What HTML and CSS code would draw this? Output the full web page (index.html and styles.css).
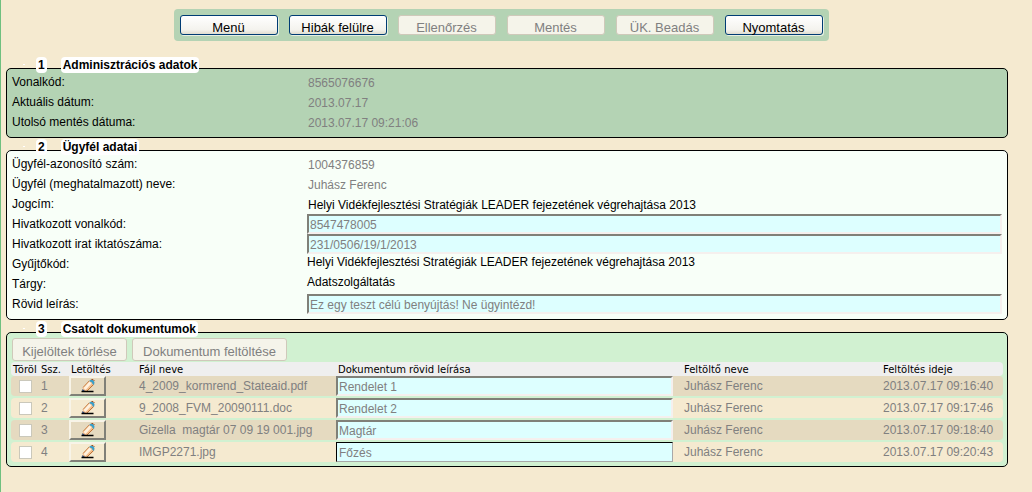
FILE: index.html
```
<!DOCTYPE html>
<html lang="hu">
<head>
<meta charset="utf-8">
<title>Adatszolgáltatás</title>
<link rel="stylesheet" href="styles.css">
</head>
<body>
<svg class="defs" aria-hidden="true">
  <symbol id="pencil" viewBox="0 0 14 14">
    <path d="M1.500 12 L2 8 L8 1.500 L10.500 1 L13.500 4 L12.500 6.500 L6.500 12 Z" fill="#f6bf8c"/>
    <path d="M2.500 9 L8.500 2.500 L10.500 4.500 L4.500 11 Z" fill="#fff1de"/>
    <path d="M6 12 L12.500 5.500" stroke="#b8733c" fill="none"/>
    <path d="M2 8.500 L8 2" stroke="#c98c58" fill="none"/>
    <path d="M8 2 L10 0.500 L12 1 L13.500 3 L13 6 L11.500 5 L11 3.500 Z" fill="#3b9fc8"/>
    <path d="M10.500 0.500 H12 L13.500 2" stroke="#a2501f" fill="none"/>
    <path d="M1.500 10 L1 12.500 L4 12 Z" fill="#2c4a86"/>
    <path d="M0.500 12.500 H12.500" stroke="#000" stroke-width="1.500"/>
  </symbol>
</svg>
<main class="page">
  <nav class="toolbar">
    <button type="button" class="btn">Menü</button>
    <button type="button" class="btn">Hibák felülre</button>
    <button type="button" class="btn" disabled>Ellenőrzés</button>
    <button type="button" class="btn" disabled>Mentés</button>
    <button type="button" class="btn" disabled>ÜK. Beadás</button>
    <button type="button" class="btn">Nyomtatás</button>
  </nav>

  <fieldset class="panel panel-admin">
    <legend class="legend"><span class="chip">1</span><span class="chip">Adminisztrációs adatok</span></legend>
    <dl class="rows">
      <dt>Vonalkód:</dt><dd class="muted">8565076676</dd>
      <dt>Aktuális dátum:</dt><dd class="muted">2013.07.17</dd>
      <dt>Utolsó mentés dátuma:</dt><dd class="muted">2013.07.17 09:21:06</dd>
    </dl>
  </fieldset>

  <fieldset class="panel panel-client">
    <legend class="legend"><span class="chip">2</span><span class="chip">Ügyfél adatai</span></legend>
    <dl class="rows">
      <dt>Ügyfél-azonosító szám:</dt><dd class="muted">1004376859</dd>
      <dt>Ügyfél (meghatalmazott) neve:</dt><dd class="muted">Juhász Ferenc</dd>
      <dt>Jogcím:</dt><dd>Helyi Vidékfejlesztési Stratégiák LEADER fejezetének végrehajtása 2013</dd>
      <dt><label for="ref-code">Hivatkozott vonalkód:</label></dt><dd class="control"><input class="field" id="ref-code" type="text" value="8547478005" disabled></dd>
      <dt><label for="ref-doc">Hivatkozott irat iktatószáma:</label></dt><dd class="control"><input class="field" id="ref-doc" type="text" value="231/0506/19/1/2013" disabled></dd>
      <dt>Gyűjtőkód:</dt><dd class="plain">Helyi Vidékfejlesztési Stratégiák LEADER fejezetének végrehajtása 2013</dd>
      <dt>Tárgy:</dt><dd class="plain">Adatszolgáltatás</dd>
      <dt><label for="short-desc">Rövid leírás:</label></dt><dd class="control"><input class="field" id="short-desc" type="text" value="Ez egy teszt célú benyújtás! Ne ügyintézd!" disabled></dd>
    </dl>
  </fieldset>

  <fieldset class="panel panel-docs">
    <legend class="legend"><span class="chip">3</span><span class="chip">Csatolt dokumentumok</span></legend>
    <div class="actions">
      <button type="button" class="btn btn-delete" disabled>Kijelöltek törlése</button>
      <button type="button" class="btn btn-upload" disabled>Dokumentum feltöltése</button>
    </div>
    <table class="docs">
      <colgroup><col class="c-check"><col class="c-num"><col class="c-get"><col class="c-file"><col><col class="c-user"><col class="c-time"></colgroup>
      <thead>
        <tr><th>Töröl</th><th>Ssz.</th><th>Letöltés</th><th>Fájl neve</th><th>Dokumentum rövid leírása</th><th>Feltöltő neve</th><th>Feltöltés ideje</th></tr>
      </thead>
      <tbody>
        <tr>
          <td><input type="checkbox" class="check" aria-label="Töröl 1" disabled></td><td>1</td>
          <td><button type="button" class="get" aria-label="Letöltés 1"><svg class="icon"><use href="#pencil"/></svg></button></td>
          <td>4_2009_kormrend_Stateaid.pdf</td><td><input class="field" type="text" aria-label="Dokumentum rövid leírása 1" value="Rendelet 1" disabled></td><td>Juhász Ferenc</td><td>2013.07.17 09:16:40</td>
        </tr>
        <tr>
          <td><input type="checkbox" class="check" aria-label="Töröl 2" disabled></td><td>2</td>
          <td><button type="button" class="get" aria-label="Letöltés 2"><svg class="icon"><use href="#pencil"/></svg></button></td>
          <td>9_2008_FVM_20090111.doc</td><td><input class="field" type="text" aria-label="Dokumentum rövid leírása 2" value="Rendelet 2" disabled></td><td>Juhász Ferenc</td><td>2013.07.17 09:17:46</td>
        </tr>
        <tr>
          <td><input type="checkbox" class="check" aria-label="Töröl 3" disabled></td><td>3</td>
          <td><button type="button" class="get" aria-label="Letöltés 3"><svg class="icon"><use href="#pencil"/></svg></button></td>
          <td>Gizella&nbsp; magtár 07 09 19 001.jpg</td><td><input class="field" type="text" aria-label="Dokumentum rövid leírása 3" value="Magtár" disabled></td><td>Juhász Ferenc</td><td>2013.07.17 09:18:40</td>
        </tr>
        <tr>
          <td><input type="checkbox" class="check" aria-label="Töröl 4" disabled></td><td>4</td>
          <td><button type="button" class="get" aria-label="Letöltés 4"><svg class="icon"><use href="#pencil"/></svg></button></td>
          <td>IMGP2271.jpg</td><td><input class="field field-active" type="text" aria-label="Dokumentum rövid leírása 4" value="Főzés" disabled></td><td>Juhász Ferenc</td><td>2013.07.17 09:20:43</td>
        </tr>
      </tbody>
    </table>
  </fieldset>
</main>
</body>
</html>
```
FILE: styles.css
```
* { box-sizing: border-box; }

body {
  margin: 0;
  min-height: 100vh;
  background: #f5ead0;
  border-left: 1px solid #6fc07f;
  color: #000;
  font: 12px/20px "Liberation Sans", Arial, sans-serif;
}

button, input { font: inherit; color: inherit; margin: 0; }

.defs { display: none; }

.page {
  display: flex;
  flex-direction: column;
  gap: 12px;
  padding: 9px 24px 24px 5px;
}

.toolbar {
  display: flex;
  gap: 11px;
  align-self: center;
  margin: 0 12px 15px 0;
  padding: 6px;
  border-radius: 4px;
  background: #b4d3b4;
}

.btn {
  width: 98px;
  height: 20px;
  padding: 4px 0 0;
  border: 1px solid #003c74;
  border-radius: 3px;
  background: linear-gradient(#fff, #f4f3ee 75%, #e0ddd0);
  box-shadow: 1px 1px 0 #e6efe2;
  font-size: 13px;
  line-height: 16px;
  white-space: nowrap;
}

.btn:disabled {
  border-color: #cfc9ba;
  background: #f5f4ea;
  box-shadow: none;
  color: #808080;
}

.panel {
  position: relative;
  min-width: 0;
  margin: 0;
  padding: 3px 5px 5px;
  border: 1px solid #000;
  border-radius: 5px;
}

.panel-admin { background: #b4d3b4; }
.panel-client { background: #f8fff8; }
.panel-docs { padding: 5px 4px 2px; background: #d1f1d1; }

/* The legend sits over the panel's top border. */
.legend {
  position: absolute;
  top: -12px;
  left: 16px;
  display: flex;
  gap: 14px;
  padding: 0;
  font-weight: bold;
  line-height: 14px;
}

.legend::before {
  content: "";
  width: 2px;
  height: 1px;
  margin: 7px -3px 0 0;
  background: #fff;
}

.chip {
  padding: 1px 2px;
  border-radius: 4px;
  background: #fff;
}

.rows {
  display: grid;
  grid-template-columns: 295px 1fr;
  grid-auto-rows: 20px;
  margin: 0;
}

.rows dd { margin: 0; padding: 1px 0 0 1px; }
.rows .muted { color: #808080; }
.rows .control { padding: 0; }
.rows .plain { padding: 0; line-height: 16px; }

.field {
  display: block;
  width: 100%;
  height: 20px;
  padding: 1px 1px 0;
  border: 2px solid;
  border-color: #808078 #f5f0ee #f5f0ee #808078;
  background: #dff;
  color: #808080;
}

.field-active {
  padding: 2px 2px 1px;
  border-width: 1px;
  border-color: #000 #a8a8a8 #a8a8a8 #000;
}

.actions {
  display: flex;
  gap: 5px;
  padding-left: 1px;
}

.actions .btn { height: 23px; padding-top: 4px; }
.actions .btn-delete { width: 115px; }
.actions .btn-upload { width: 155px; }

.docs {
  width: 100%;
  margin-top: -1px;
  table-layout: fixed;
  border-collapse: separate;
  border-spacing: 0 2px;
}

.c-check { width: 28px; }
.c-num { width: 30px; }
.c-get { width: 68px; }
.c-file { width: 199px; }
.c-user { width: 199px; }
.c-time { width: 122px; }

.docs th {
  height: 12px;
  padding: 4px 2px 0;
  background: #efefef;
  box-shadow: 0 2px 0 #efefef;
  font: 10px/8px "DejaVu Sans", Verdana, sans-serif;
  text-align: left;
  white-space: nowrap;
}

.docs td {
  height: 20px;
  padding: 1px 2px 0;
  background: #f5ead0;
  color: #808080;
  line-height: 19px;
  white-space: nowrap;
}

.docs tbody tr:nth-child(odd) td { background: #e5dac0; }
.docs tr > :first-child { border-radius: 4px 0 0 4px; }
.docs tr > :last-child { border-radius: 0 4px 4px 0; }
.docs td:nth-child(1) { padding: 0 8px; }
.docs td:nth-child(3) { padding: 0; }
.docs td:nth-child(5) { padding: 0 9px 0 0; }

.check {
  display: block;
  width: 13px;
  height: 13px;
  appearance: none;
  border: 1px solid #cac8bb;
  background: #fff;
}

.get {
  display: flex;
  align-items: center;
  justify-content: center;
  width: 37px;
  height: 20px;
  padding: 0;
  border: 2px solid;
  border-color: #f8f4e8 #808078 #808078 #f8f4e8;
  background: transparent;
}

.icon { width: 14px; height: 14px; }
```
